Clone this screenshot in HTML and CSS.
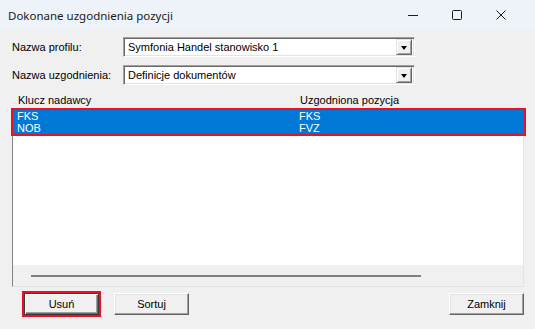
FILE: index.html
```html
<!DOCTYPE html>
<html lang="pl">
<head>
<meta charset="utf-8">
<title>Dokonane uzgodnienia pozycji</title>
<link rel="stylesheet" href="styles.css">
</head>
<body>
<div class="window">
  <div class="titlebar">
    <span class="title">Dokonane uzgodnienia pozycji</span>
    <div class="controls">
      <span class="ctl"><svg width="10" height="10" viewBox="0 0 10 10"><path d="M0 5.5h10" stroke="#1a1a1a" stroke-width="1"/></svg></span>
      <span class="ctl"><svg width="10" height="10" viewBox="0 0 10 10"><rect x="0.5" y="0.5" width="9" height="9" rx="1" fill="none" stroke="#1a1a1a" stroke-width="1"/></svg></span>
      <span class="ctl"><svg width="10" height="10" viewBox="0 0 10 10"><path d="M0.5 0.5L9.5 9.5M9.5 0.5L0.5 9.5" stroke="#1a1a1a" stroke-width="1"/></svg></span>
    </div>
  </div>
  <div class="content">
    <div class="row">
      <span class="label">Nazwa profilu:</span>
      <div class="combo"><span class="combo-text">Symfonia Handel stanowisko 1</span><span class="combo-btn"><span class="tri"></span></span></div>
    </div>
    <div class="row">
      <span class="label">Nazwa uzgodnienia:</span>
      <div class="combo"><span class="combo-text">Definicje dokumentów</span><span class="combo-btn"><span class="tri"></span></span></div>
    </div>
    <div class="list-head">
      <span class="col1">Klucz nadawcy</span>
      <span class="col2">Uzgodniona pozycja</span>
    </div>
    <div class="list">
      <div class="selected">
        <div class="item"><span class="col1">FKS</span><span class="col2">FKS</span></div>
        <div class="item"><span class="col1">NOB</span><span class="col2">FVZ</span></div>
      </div>
      <div class="list-fill"></div>
      <div class="hscroll"><span class="thumb"></span></div>
    </div>
    <div class="buttons">
      <div class="focus-mark"><button class="btn default">Usuń</button></div>
      <button class="btn sort">Sortuj</button>
      <span class="spacer"></span>
      <button class="btn">Zamknij</button>
    </div>
  </div>
</div>
</body>
</html>
```
FILE: styles.css
```css
html, body {
  margin: 0;
  padding: 0;
}
body {
  width: 535px;
  height: 329px;
  overflow: hidden;
  background: #f0f0f0;
  font-family: "Liberation Sans", Arial, sans-serif;
  font-size: 11px;
  color: #000;
}
.window {
  width: 535px;
  height: 329px;
  display: flex;
  flex-direction: column;
  background: #f0f0f0;
}
.titlebar {
  height: 30px;
  flex: none;
  background: #eef2f9;
  display: flex;
  align-items: center;
  padding-left: 8px;
}
.title {
  font-family: "Noto Sans", "Liberation Sans", sans-serif;
  font-size: 11.5px;
  color: #1a1a1a;
  flex: 1;
}
.controls {
  display: flex;
  height: 30px;
  padding-right: 12px;
}
.ctl {
  width: 44px;
  display: flex;
  align-items: center;
  justify-content: center;
}
.ctl svg { display: block; }
.content {
  flex: 1;
  padding: 7px 11px 0 12px;
  display: flex;
  flex-direction: column;
}
.row {
  display: flex;
  align-items: center;
  height: 20px;
  margin-bottom: 8px;
}
.label {
  width: 111px;
  flex: none;
}
.combo {
  width: 292px;
  height: 20px;
  box-sizing: border-box;
  background: #fff;
  border: 1px solid;
  border-color: #a0a0a0 #fff #fff #a0a0a0;
  box-shadow: inset 1px 1px 0 #696969, inset -1px -1px 0 #e3e3e3;
  display: flex;
  align-items: center;
  padding: 2px;
}
.combo-text {
  flex: 1;
  padding-left: 2px;
  white-space: nowrap;
}
.combo-btn {
  width: 16px;
  height: 16px;
  box-sizing: border-box;
  background: #f0f0f0;
  border: 1px solid;
  border-color: #e3e3e3 #696969 #696969 #e3e3e3;
  box-shadow: inset 1px 1px 0 #fff, inset -1px -1px 0 #a0a0a0;
  display: flex;
  align-items: center;
  justify-content: center;
}
.tri {
  width: 0;
  height: 0;
  border-left: 3.5px solid transparent;
  border-right: 3.5px solid transparent;
  border-top: 4px solid #000;
  margin-top: 1px;
}
.list-head {
  display: flex;
  align-items: center;
  margin-top: -5px;
  padding-left: 6px;
  padding-top: 3px;
  box-sizing: border-box;
  height: 21px;
}
.col1 {
  width: 282px;
  flex: none;
}
.list {
  height: 178px;
  box-sizing: border-box;
  border: 1px solid;
  border-color: #828282 #e3e3e3 #e3e3e3 #828282;
  background: #fff;
  display: flex;
  flex-direction: column;
}
.selected {
  background: #0078d7;
  color: #fff;
  outline: 2px solid #e81123;
  margin-right: -1px;
}
.item {
  display: flex;
  height: 12px;
  line-height: 12px;
  padding-left: 4px;
}
.list-fill {
  flex: 1;
}
.hscroll {
  height: 21px;
  flex: none;
  background: #f0f0f0;
  display: flex;
  align-items: center;
  padding-left: 18px;
}
.thumb {
  width: 390px;
  height: 2px;
  background: #808080;
}
.buttons {
  display: flex;
  align-items: center;
  margin-top: 6px;
  padding-left: 12px;
}
.focus-mark {
  outline: 2px solid #e81123;
  display: flex;
}
.btn {
  font-family: "Liberation Sans", Arial, sans-serif;
  font-size: 11px;
  color: #000;
  width: 75px;
  height: 22px;
  box-sizing: border-box;
  background: #f0f0f0;
  border: 1px solid;
  border-color: #fff #646464 #646464 #fff;
  box-shadow: inset -1px -1px 0 #a0a0a0, inset 1px 1px 0 #e3e3e3;
  padding: 0;
  margin: 0;
}
.btn.default {
  width: 75px;
  border-color: #3c3c3c;
  box-shadow: inset 1px 1px 0 #fff, inset -1px -1px 0 #646464, inset -2px -2px 0 #a0a0a0;
}
.sort {
  margin-left: 15px;
}
.spacer {
  flex: 1;
}
```
